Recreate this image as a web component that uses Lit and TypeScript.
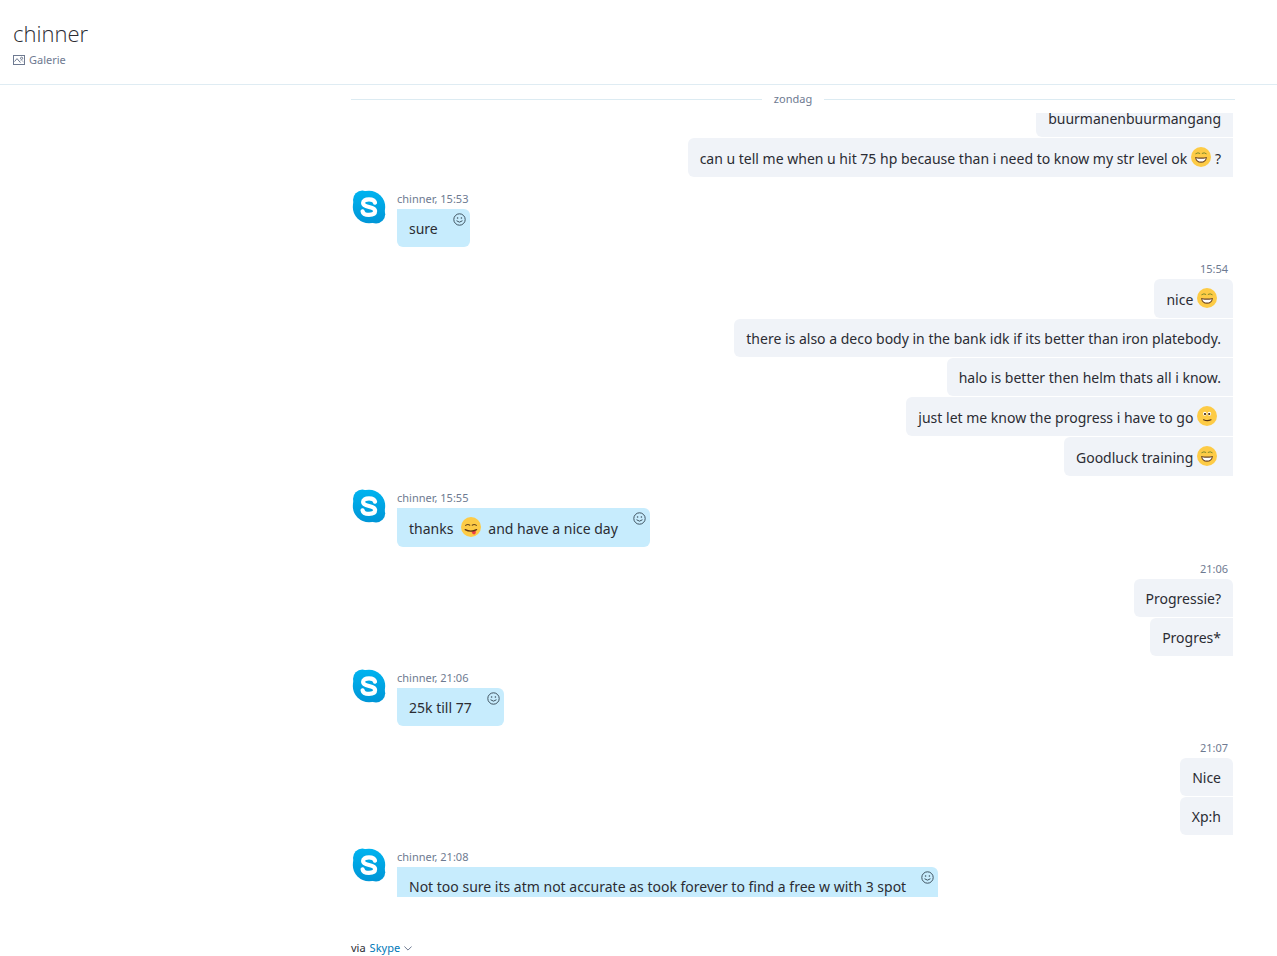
import { LitElement, html, css, svg, nothing } from "lit";
import { customElement, property } from "lit/decorators.js";

type Part = string | { emoji: string };
interface Group {
  sender?: string;
  time?: string;
  messages: Part[][];
}

const laugh: Part = { emoji: "laugh" };
const smile: Part = { emoji: "smile" };
const tongue: Part = { emoji: "tongue" };

const groups: Group[] = [
  {
    messages: [
      ["buurmanenbuurmangang"],
      ["can u tell me when u hit 75 hp because than i need to know my str level ok ", laugh, "?"],
    ],
  },
  { sender: "chinner", time: "15:53", messages: [["sure"]] },
  {
    time: "15:54",
    messages: [
      ["nice ", laugh],
      ["there is also a deco body in the bank idk if its better than iron platebody."],
      ["halo is better then helm thats all i know."],
      ["just let me know the progress i have to go ", smile],
      ["Goodluck training ", laugh],
    ],
  },
  { sender: "chinner", time: "15:55", messages: [["thanks  ", tongue, " and have a nice day"]] },
  { time: "21:06", messages: [["Progressie?"], ["Progres*"]] },
  { sender: "chinner", time: "21:06", messages: [["25k till 77"]] },
  { time: "21:07", messages: [["Nice"], ["Xp:h"]] },
  {
    sender: "chinner",
    time: "21:08",
    messages: [["Not too sure its atm not accurate as took forever to find a free w with 3 spot"]],
  },
];

@customElement("skype-emoji")
class SkypeEmoji extends LitElement {
  @property() name = "smile";

  static styles = css`
    :host {
      display: inline-block;
      width: 20px;
      height: 20px;
      margin: -1px 4px 0 0;
      vertical-align: -3px;
    }
    svg {
      display: block;
    }
  `;

  private face() {
    if (this.name === "laugh") {
      return svg`
        <path d="M4.8 6.6Q7 5 8.8 6.3M11.2 6.3Q13.2 5 15.2 6.6" fill="none" stroke="#7f8a2a" stroke-width="1" stroke-linecap="round"/>
        <path d="M4 10Q10 11.2 16 10Q15.2 15.8 10 15.8Q4.8 15.8 4 10Z" fill="#6b4526"/>
        <path d="M5.2 11.2Q10 12.2 14.8 11.2Q13.8 14.6 10 14.6Q6.2 14.6 5.2 11.2Z" fill="#fff"/>`;
    }
    if (this.name === "tongue") {
      return svg`
        <path d="M4.6 8.4Q6.8 6.8 8.8 8.2M11.2 8.2Q13.2 6.8 15.4 8.4" fill="none" stroke="#6b4a1c" stroke-width="1.1" stroke-linecap="round"/>
        <path d="M10.4 14.4L14.6 13.4Q15.4 17 13.2 17.4Q11.2 17.2 10.4 14.4Z" fill="#ee3f45"/>
        <path d="M4.2 12.6Q9.8 15.6 15.6 12.6" fill="none" stroke="#5a3413" stroke-width="1.2" stroke-linecap="round"/>`;
    }
    return svg`
      <ellipse cx="7.8" cy="7.8" rx="1.8" ry="2" fill="#fff"/>
      <ellipse cx="12.4" cy="7.8" rx="1.8" ry="2" fill="#fff"/>
      <circle cx="8" cy="8" r="1.1" fill="#3a220e"/>
      <circle cx="12.2" cy="8" r="1.1" fill="#3a220e"/>
      <path d="M6.6 13.8Q10.4 15.6 14 13.8" fill="none" stroke="#5a3413" stroke-width="1.2" stroke-linecap="round"/>`;
  }

  render() {
    return html`<svg width="20" height="20" viewBox="0 0 20 20" aria-hidden="true">
      <circle cx="10" cy="10" r="10" fill="#fdcb46" />
      ${this.face()}
    </svg>`;
  }
}

@customElement("skype-avatar")
class SkypeAvatar extends LitElement {
  static styles = css`
    :host {
      display: block;
      width: 34px;
      height: 34px;
    }
    svg {
      display: block;
    }
  `;

  render() {
    return html`<svg width="34" height="34" viewBox="0 0 34 34" aria-hidden="true">
      <defs>
        <linearGradient id="g" gradientUnits="userSpaceOnUse" x1="0" y1="0" x2="0" y2="34">
          <stop offset="0" stop-color="#00b4f0" />
          <stop offset="1" stop-color="#0095d6" />
        </linearGradient>
      </defs>
      <circle cx="10.4" cy="10" r="9.4" fill="url(#g)" />
      <circle cx="24" cy="24.2" r="9.2" fill="url(#g)" />
      <circle cx="17" cy="17" r="16.2" fill="url(#g)" />
      <path
        d="M23 12.6C22.3 9.9 20 9.4 17 9.4C13.4 9.4 11.1 10.6 11.1 13C11.1 15.5 13 16.2 17 17C21 17.8 23.1 18.6 23.1 21.1C23.1 23.7 20.8 24.9 17 24.9C13.6 24.9 11.1 24.2 10.6 21.3"
        fill="none" stroke="#fff" stroke-width="4.2" stroke-linecap="round" />
    </svg>`;
  }
}

@customElement("message-group")
class MessageGroup extends LitElement {
  @property({ attribute: false }) group!: Group;

  static styles = css`
    :host {
      display: block;
    }
    .row {
      display: flex;
      padding: 0 2px 0 1px;
    }
    .outgoing {
      justify-content: flex-end;
    }
    skype-avatar {
      flex: none;
      margin: 13px 11px 0 0;
    }
    .stack {
      display: flex;
      flex-direction: column;
      align-items: flex-start;
      gap: 1px;
      min-width: 0;
    }
    .outgoing .stack {
      align-items: flex-end;
    }
    .meta {
      padding: 14px 0 1px;
      font-size: 11px;
      line-height: 16px;
      color: #6e7a91;
    }
    .outgoing .meta {
      padding-right: 5px;
    }
    .bubble {
      position: relative;
      padding: 10px 12px 8px;
      border-radius: 6px 0 0 6px;
      background: #f0f3f8;
      font-size: 14px;
      line-height: 20px;
      color: #2b2c33;
      white-space: pre-wrap;
    }
    .meta + .bubble {
      border-top-right-radius: 6px;
    }
    .incoming .bubble {
      padding-right: 32px;
      border-radius: 0 6px 6px 6px;
      background: #c7ecfd;
    }
    .react {
      position: absolute;
      top: 4px;
      right: 4px;
      width: 13px;
      height: 13px;
      padding: 0;
      border: 0;
      background: none;
      line-height: 0;
      white-space: normal;
      cursor: pointer;
    }
    .react svg {
      display: block;
    }
  `;

  private reactButton() {
    return html`<button class="react" aria-label="Reageren">
      <svg width="13" height="13" viewBox="0 0 13 13" fill="none" stroke="#3f5360">
        <circle cx="6.5" cy="6.5" r="5.7" />
        <path d="M3.8 8Q6.5 10.6 9.2 8" stroke-linecap="round" />
        <circle cx="4.6" cy="5" r=".8" fill="#3f5360" stroke="none" />
        <circle cx="8.4" cy="5" r=".8" fill="#3f5360" stroke="none" />
      </svg>
    </button>`;
  }

  render() {
    const { sender, time, messages } = this.group;
    return html`<div class="row ${sender ? "incoming" : "outgoing"}">
      ${sender ? html`<skype-avatar></skype-avatar>` : nothing}
      <div class="stack">
        ${time ? html`<div class="meta">${sender ? `${sender}, ${time}` : time}</div>` : nothing}
        ${messages.map(
          (parts) =>
            html`<div class="bubble">${parts.map((part) =>
              typeof part === "string" ? part : html`<skype-emoji name=${part.emoji}></skype-emoji>`
            )}${sender ? this.reactButton() : nothing}</div>`
        )}
      </div>
    </div>`;
  }
}

@customElement("app-root")
class AppRoot extends LitElement {
  static styles = css`
    :host {
      display: flex;
      flex-direction: column;
      height: 100vh;
      background: #fff;
      color: #2b2c33;
      font-family: "Noto Sans", "Open Sans", sans-serif;
    }
    header {
      flex: none;
      display: flex;
      flex-direction: column;
      align-items: flex-start;
      padding: 16px 13px 15px;
      border-bottom: 1px solid #dfecf3;
    }
    h1 {
      margin: 0;
      font-family: "Open Sans", "Noto Sans", sans-serif;
      font-size: 22px;
      font-weight: 300;
      line-height: 35px;
    }
    .gallery {
      display: flex;
      align-items: center;
      gap: 4px;
      padding: 0;
      border: 0;
      background: none;
      font: inherit;
      font-size: 11px;
      line-height: 18px;
      color: #6e7a91;
      cursor: pointer;
    }
    main {
      flex: 1;
      display: flex;
      flex-direction: column;
      min-height: 0;
      padding: 0 42px 0 351px;
    }
    .day {
      flex: none;
      display: flex;
      align-items: center;
      gap: 12px;
      height: 28px;
      font-size: 11px;
      line-height: 28px;
      color: #6e7a91;
    }
    .day::before,
    .day::after {
      content: "";
      flex: 1;
      height: 1px;
      background: #dcebf2;
    }
    .log {
      flex: 1;
      min-height: 0;
      overflow: hidden;
    }
    .log message-group:first-child {
      margin-top: -14px;
    }
    footer {
      flex: none;
      height: 59px;
      padding: 42px 42px 0 351px;
      box-sizing: border-box;
      font-size: 11px;
      line-height: 18px;
    }
    .via {
      display: flex;
      align-items: center;
      gap: 4px;
    }
    .via button {
      display: inline-flex;
      align-items: center;
      gap: 4px;
      padding: 0;
      border: 0;
      background: none;
      font: inherit;
      color: #0078b8;
      cursor: pointer;
    }
  `;

  render() {
    return html`
      <header>
        <h1>chinner</h1>
        <button class="gallery">
          <svg width="12" height="10" viewBox="0 0 12 10" fill="none" stroke="#6e7a91" aria-hidden="true">
            <rect x=".5" y=".5" width="11" height="9" />
            <path d="M1.5 6.6L4 3.6L7.4 7.6" />
            <circle cx="8.6" cy="3.3" r="1.1" />
            <path d="M7.4 5.8L8.6 5.2L10.6 7" stroke-width=".6" />
          </svg>
          Galerie
        </button>
      </header>
      <main>
        <div class="day">zondag</div>
        <div class="log">
          ${groups.map((group) => html`<message-group .group=${group}></message-group>`)}
        </div>
      </main>
      <footer>
        <div class="via">
          <span>via</span>
          <button>
            Skype
            <svg width="8" height="5" viewBox="0 0 8 5" fill="none" stroke="#6e7a91" aria-hidden="true">
              <path d="M.4 .5L4 4.1L7.6 .5" />
            </svg>
          </button>
        </div>
      </footer>
    `;
  }
}
